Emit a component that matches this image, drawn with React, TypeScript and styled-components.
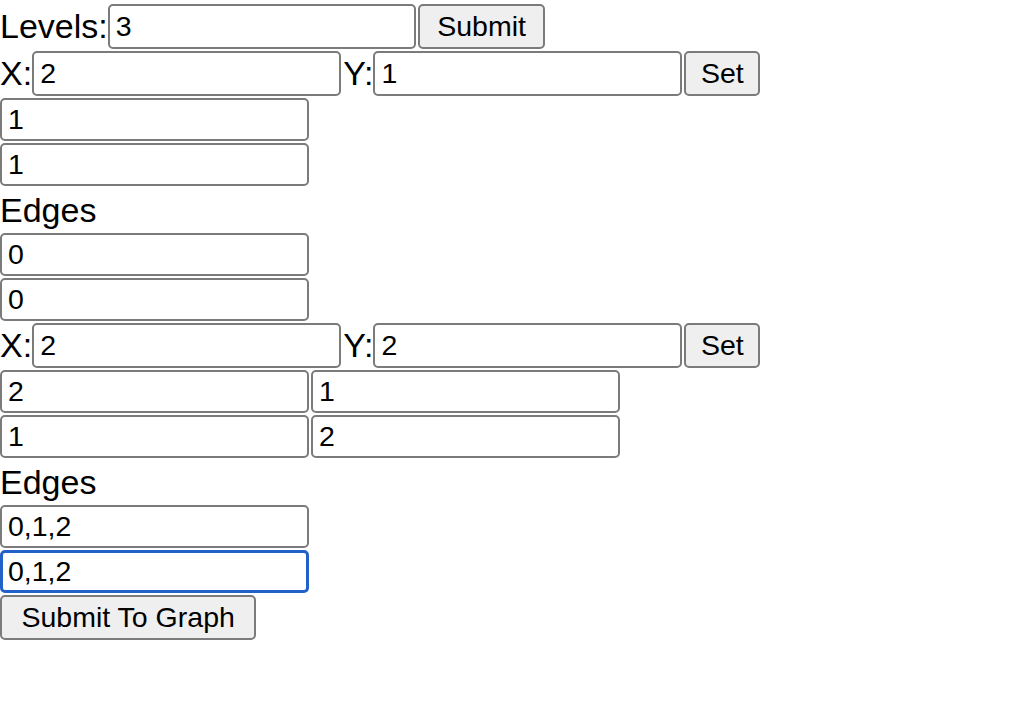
import React, { useEffect, useRef } from "react";
import styled, { createGlobalStyle, css } from "styled-components";

const Global = createGlobalStyle`
  html, body { margin: 0; padding: 0; background: #ffffff; }
  body { font-family: "Liberation Sans", Arial, sans-serif; color: #000; }
`;

const Page = styled.div`
  display: flex;
  flex-direction: column;
  align-items: flex-start;
  gap: 2px;
  padding-top: 4px;
`;

const Row = styled.div`
  display: flex;
  align-items: center;
  gap: 2px;
  height: 45px;
`;

const PairRow = styled.div`
  display: flex;
  gap: 2px;
`;

const Label = styled.span`
  font-size: 34px;
  line-height: 45px;
  margin-right: -2px;
`;

const Heading = styled.div`
  font-size: 34px;
  line-height: 42px;
  height: 42px;
  margin-top: 1px;
`;

const Field = styled.input<{ $focused?: boolean; $tall?: boolean; $w?: number }>`
  box-sizing: border-box;
  width: ${(p) => p.$w ?? 309}px;
  height: ${(p) => (p.$tall ? 45 : 43)}px;
  margin: 0;
  padding: 0 6px;
  font-family: "Liberation Sans", Arial, sans-serif;
  font-size: 28.5px;
  color: #000;
  background: #fff;
  border: 2px solid #7b7b7b;
  border-radius: 5px;
  outline: none;
  ${(p) =>
    p.$focused &&
    css`
      border: 3px solid #2161c8;
      padding: 0 5px;
      caret-color: #000;
    `}
`;

const Button = styled.button<{ $pad?: number }>`
  box-sizing: border-box;
  height: 45px;
  margin: 0;
  padding: 0 ${(p) => p.$pad ?? 17.5}px;
  font-family: "Liberation Sans", Arial, sans-serif;
  font-size: 28.5px;
  color: #000;
  background: #efefef;
  border: 2px solid #7b7b7b;
  border-radius: 5px;
`;

function XYRow({ x, y }: { x: string; y: string }) {
  return (
    <Row>
      <Label>X:</Label>
      <Field $tall defaultValue={x} />
      <Label>Y:</Label>
      <Field $tall defaultValue={y} />
      <Button $pad={14.5}>Set</Button>
    </Row>
  );
}

export default function App() {
  const focusRef = useRef<HTMLInputElement>(null);
  useEffect(() => {
    const el = focusRef.current;
    if (el) {
      el.focus();
      el.setSelectionRange(el.value.length, el.value.length);
    }
  }, []);

  return (
    <>
      <Global />
      <Page>
        <Row>
          <Label>Levels:</Label>
          <Field $tall $w={308} defaultValue="3" />
          <Button>Submit</Button>
        </Row>
        <XYRow x="2" y="1" />
        <Field defaultValue="1" />
        <Field defaultValue="1" />
        <Heading>Edges</Heading>
        <Field defaultValue="0" />
        <Field defaultValue="0" />
        <XYRow x="2" y="2" />
        <PairRow>
          <Field defaultValue="2" />
          <Field defaultValue="1" />
        </PairRow>
        <PairRow>
          <Field defaultValue="1" />
          <Field defaultValue="2" />
        </PairRow>
        <Heading>Edges</Heading>
        <Field defaultValue="0,1,2" />
        <Field ref={focusRef} $focused defaultValue="0,1,2" />
        <Button $pad={19.5}>Submit To Graph</Button>
      </Page>
    </>
  );
}
